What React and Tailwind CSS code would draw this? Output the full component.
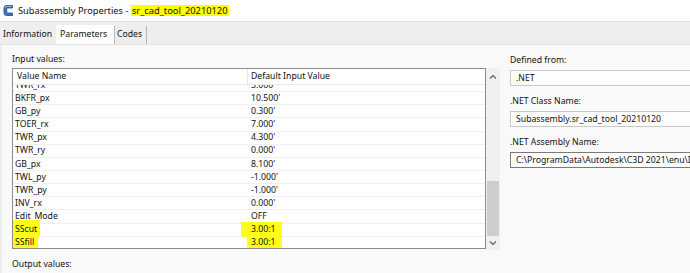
import React from 'react';

const rows = [
  ['BKFR_px', "10.500'"],
  ['GB_py', "0.300'"],
  ['TOER_rx', "7.000'"],
  ['TWR_px', "4.300'"],
  ['TWR_ry', "0.000'"],
  ['GB_px', "8.100'"],
  ['TWL_py', "-1.000'"],
  ['TWR_py', "-1.000'"],
  ['INV_rx', "0.000'"],
  ['Edit_Mode', 'OFF'],
  ['SScut', '3.00:1', 'left-[-5px] top-[-3px] bottom-[-2px] right-[-3px]', 'left-[-10px] top-[-1px] bottom-[-2px] right-[-6px]'],
  ['SSfill', '3.00:1', 'left-[-5px] top-[-2px] bottom-[-1px] right-[-4px]', 'left-[-4px] top-[0px] bottom-[-3px] right-[-6px]'],
];

const AppIcon = () => (
  <svg width="11" height="13" viewBox="0 0 11 13" className="mr-[4px] shrink-0">
    <path d="M9.5 1.5 L3.5 1.5 Q1 1.5 1 4 L1 9 Q1 11.5 3.5 11.5 L9.5 11.5 L9.5 9 L4.5 9 Q3.8 9 3.8 8.3 L3.8 4.7 Q3.8 4 4.5 4 L9.5 4 Z" fill="#3d73b8" stroke="#1f4f8a" strokeWidth="0.8" />
    <path d="M2 4 Q2 2.5 3.5 2.5 L8.5 2.5" fill="none" stroke="#a9c8ee" strokeWidth="0.8" />
  </svg>
);

const Mark = ({ box, children }) =>
  box ? (
    <span className="relative">
      <span className={`absolute bg-[#ffff1a] ${box}`} />
      <span className="relative">{children}</span>
    </span>
  ) : (
    <span>{children}</span>
  );

const Row = ({ name, value, nameBox, valueBox }) => (
  <div className="flex h-[13.15px] items-center border-b border-[#f0f0f0] text-[8.7px] leading-none">
    <div className="w-[236px] shrink-0 pl-[2px]">
      <Mark box={nameBox}>{name}</Mark>
    </div>
    <div className="pl-[2px]">
      <Mark box={valueBox}>{value}</Mark>
    </div>
  </div>
);

const Field = ({ label, value, dark }) => (
  <div className="flex flex-col">
    <div className="h-[13px] text-[8.7px] leading-[13px]">{label}</div>
    <div
      className={`mt-[3px] h-[16px] w-[200px] border pl-[5px] text-[8.7px] leading-[14px] whitespace-nowrap ${
        dark ? 'border-[#7a7a7a] bg-white' : 'border-[#c9c9c9] bg-[#fdfdfd]'
      }`}
    >
      {value}
    </div>
  </div>
);

export default function App() {
  return (
    <div className="w-[690px] h-[273px] overflow-hidden bg-[#f9f9f9] text-[#111] font-['Noto_Sans',sans-serif]">
      {/* Title bar */}
      <div className="flex h-[21px] items-center bg-white pl-[3px] text-[9.3px]">
        <AppIcon />
        <span className="whitespace-pre">Subassembly Properties - </span>
        <span className="bg-[#ffff00] px-[1px] leading-[11px]">sr_cad_tool_20210120</span>
      </div>

      {/* Tabs */}
      <div className="flex h-[24px] items-end border-t border-[#e0e0e0] bg-[#eeeeee] text-[8.7px] border-b border-b-[#e3e3e3]">
        <div className="flex h-[18px] w-[56px] items-center pl-[3px]">Information</div>
        <div className="flex h-[19px] w-[58px] items-center bg-white pl-[4px]">Parameters</div>
        <div className="flex h-[18px] w-[33px] items-center border-x border-[#b5b5b5] pl-[2px]">Codes</div>
      </div>

      {/* Page */}
      <div className="flex border-l-2 border-[#ececec]">
        {/* Left column */}
        <div className="w-[498px] shrink-0 pl-[10px]">
          <div className="mt-[8px] h-[13px] text-[8.7px] leading-[13px]">Input values:</div>
          <div className="mt-[2px] flex">
            <div className="h-[181px] w-[474px] overflow-hidden border border-[#8c8c8c] bg-white">
              <div className="flex h-[16px] items-center border-b border-[#e8e8e8] text-[8.7px]">
                <div className="w-[235px] shrink-0 border-r border-[#e5e5e5] pl-[4px] leading-[15px]">Value Name</div>
                <div className="pl-[3px]">Default Input Value</div>
              </div>
              <div className="h-[163px] overflow-hidden">
                <div className="mt-[-6px]">
                  <Row name="TWR_rx" value="3.000'" />
                  {rows.map(([n, v, nb, vb]) => (
                    <Row key={n} name={n} value={v} nameBox={nb} valueBox={vb} />
                  ))}
                </div>
              </div>
            </div>
            {/* Scrollbar */}
            <div className="flex h-[182px] w-[14px] flex-col items-center bg-[#f0f0f0]">
              <svg width="8" height="16" viewBox="0 0 8 16" className="mt-[1px]">
                <path d="M1 9.5 L4 6.5 L7 9.5" fill="none" stroke="#606060" strokeWidth="1.2" />
              </svg>
              <div className="flex-1" />
              <div className="h-[55px] w-[12px] bg-[#cdcdcd]" />
              <svg width="8" height="14" viewBox="0 0 8 14">
                <path d="M1 5.5 L4 8.5 L7 5.5" fill="none" stroke="#606060" strokeWidth="1.2" />
              </svg>
            </div>
          </div>
          <div className="mt-[8px] h-[13px] text-[8.7px] leading-[13px]">Output values:</div>
          <div className="mt-[2px] h-[10px] w-[488px] border border-[#c6c6c6] bg-white" />
        </div>

        {/* Right column */}
        <div className="flex flex-col gap-[9px] pl-[10px] pt-[9px]">
          <Field label="Defined from:" value=".NET" />
          <Field label=".NET Class Name:" value="Subassembly.sr_cad_tool_20210120" />
          <Field label=".NET Assembly Name:" value="C:\ProgramData\Autodesk\C3D 2021\enu\Imperial" dark />
        </div>
      </div>
    </div>
  );
}
